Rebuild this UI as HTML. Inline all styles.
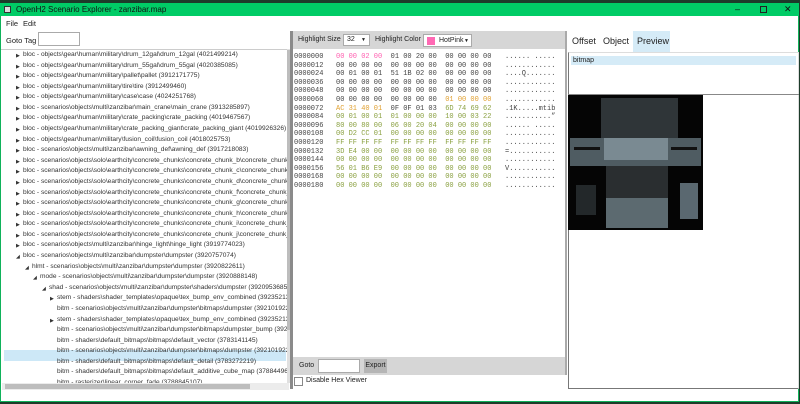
<!DOCTYPE html>
<html><head><meta charset="utf-8"><style>
*{margin:0;padding:0;box-sizing:border-box}
body{width:800px;height:404px;overflow:hidden;background:#1d3b2a;font-family:"Liberation Sans",sans-serif;font-size:7.5px;color:#222;position:relative}
.abs{position:absolute}
#win{left:0;top:3px;width:799px;height:399px;background:#fff;border:1px solid #0fb25a}
#title{left:0;top:3px;width:799px;height:13px;background:#00cc66;font-size:8px;line-height:13px;color:#111}
.row{position:absolute;white-space:nowrap;height:10.6px;line-height:10.6px;font-size:6.6px;color:#333}
.ar{position:absolute;font-size:5px;color:#333}
.hex{position:absolute;white-space:pre;font-family:"Liberation Mono",monospace;font-size:7px;line-height:8.6px;color:#444}
.p{color:#ff5fb0}.o{color:#e0a030}.g{color:#8aa040}
</style></head><body>
<div id="win" class="abs"></div>
<div id="title" class="abs"><span class="abs" style="left:4px;top:3px;width:7px;height:7px;border:1px solid #333;background:#ddd"></span><span class="abs" style="left:16px;top:0">OpenH2 Scenario Explorer - zanzibar.map</span>
<span class="abs" style="left:735px;top:0;font-size:9px">–</span>
<span class="abs" style="left:760px;top:3px;width:7px;height:7px;border:1px solid #222"></span>
<span class="abs" style="left:784px;top:0;font-size:9px">✕</span></div>
<div class="abs" style="left:6px;top:19px;font-size:7.5px">File</div>
<div class="abs" style="left:23px;top:19px;font-size:7.5px">Edit</div>
<div class="abs" style="left:6px;top:36px;font-size:7.5px">Goto Tag</div>
<div class="abs" style="left:38px;top:32px;width:42px;height:14px;border:1px solid #aaa"></div>
<div class="abs" style="left:1px;top:49px;width:289px;height:340px;overflow:hidden;border-top:1px solid #ccc">
<div class="abs" style="left:3px;top:300px;width:282px;height:10.6px;background:#cde8f7"></div>
</div>
<div id="tree"></div>
<div class="abs" style="left:287px;top:49px;width:4px;height:334px;background:#e0e0e0"></div>
<div class="abs" style="left:287px;top:50px;width:4px;height:280px;background:#bdbdbd"></div>
<div class="abs" style="left:2px;top:383px;width:287px;height:7px;background:#ececec"></div>
<div class="abs" style="left:5px;top:384px;width:245px;height:5px;background:#bdbdbd"></div>
<div class="abs" style="left:290px;top:31px;width:3px;height:358px;background:#8a8a8a"></div>
<div class="abs" style="left:293px;top:31px;width:272px;height:18px;background:#d6d6d6"></div>
<div class="abs" style="left:298px;top:36px;font-size:7px">Highlight Size</div>
<div class="abs" style="left:343px;top:34px;width:27px;height:12px;background:#fff;border:1px solid #aaa;font-size:7px;padding:1px 3px">32 <span style="position:absolute;right:3px;font-size:5px;top:2px">▼</span></div>
<div class="abs" style="left:375px;top:36px;font-size:7px">Highlight Color</div>
<div class="abs" style="left:423px;top:34px;width:49px;height:13px;background:#fff;border:1px solid #aaa;font-size:7px"><span class="abs" style="left:3px;top:2px;width:8px;height:8px;background:#ff69b4"></span><span class="abs" style="left:15px;top:2px">HotPink</span><span class="abs" style="left:40px;top:3px;font-size:5px">▼</span></div>
<div class="hex" style="left:294px;top:53px">0000000
0000012
0000024
0000036
0000048
0000060
0000072
0000084
0000096
0000108
0000120
0000132
0000144
0000156
0000168
0000180</div>
<div class="hex" style="left:336px;top:53px"><span class="p">00 00 02 00</span>  01 00 20 00  00 00 00 00
00 00 00 00  00 00 00 00  00 00 00 00
00 01 00 01  51 1B 02 00  00 00 00 00
00 00 00 00  00 00 00 00  00 00 00 00
00 00 00 00  00 00 00 00  00 00 00 00
00 00 00 00  00 00 00 00  <span class="o">01 00 00 00</span>
<span class="o">AC 31 40 01</span>  0F 0F 01 03  <span class="g">6D 74 69 62</span>
<span class="g">00 01 00 01  01 00 00 00  10 00 03 22
80 00 80 00  06 00 20 04  00 00 00 00
00 D2 CC 01  00 00 00 00  00 00 00 00
FF FF FF FF  FF FF FF FF  FF FF FF FF
3D E4 00 00  00 00 00 00  00 00 00 00
00 00 00 00  00 00 00 00  00 00 00 00
56 01 B6 E9  00 00 00 00  00 00 00 00
00 00 00 00  00 00 00 00  00 00 00 00
00 00 00 00  00 00 00 00  00 00 00 00</span></div>
<div class="hex" style="left:505px;top:53px">...... .....
............
....Q.......
............
............
............
.1K.....mtib
...........”
...... .....
............
............
=...........
............
V...........
............
............</div>
<div class="abs" style="left:293px;top:357px;width:272px;height:18px;background:#d6d6d6"></div>
<div class="abs" style="left:299px;top:362px;font-size:7px">Goto</div>
<div class="abs" style="left:318px;top:359px;width:42px;height:14px;background:#fff;border:1px solid #aaa"></div>
<div class="abs" style="left:364px;top:359px;width:23px;height:14px;background:#b5b5b5;font-size:7px;line-height:14px;text-align:center">Export</div>
<div class="abs" style="left:294px;top:377px;width:9px;height:9px;border:1px solid #888;background:#fff"></div>
<div class="abs" style="left:306px;top:377px;font-size:7px">Disable Hex Viewer</div>
<div class="abs" style="left:565px;top:31px;width:2px;height:344px;background:#aaa"></div>
<div class="abs" style="left:568px;top:52px;width:231px;height:337px;border:1px solid #777;border-top:1px solid #ddd;border-right:1px solid #ddd"></div>
<div class="abs" style="left:633px;top:31px;width:37px;height:21px;background:#d5ebf7"></div>
<div class="abs" style="left:572px;top:36px;font-size:9px">Offset</div>
<div class="abs" style="left:603px;top:36px;font-size:9px">Object</div>
<div class="abs" style="left:637px;top:36px;font-size:9px">Preview</div>
<div class="abs" style="left:571px;top:56px;width:225px;height:9px;background:#d5ebf7;font-size:7px;line-height:9px;padding-left:2px">bitmap</div>
<div class="abs" style="left:568px;top:94px;width:231px;height:1px;background:#888"></div>
<div class="abs" style="left:568px;top:95px;width:135px;height:135px;background:#050505">
<div class="abs" style="left:33px;top:3px;width:77px;height:41px;background:#2f3538"></div>
<div class="abs" style="left:2px;top:43px;width:131px;height:28px;background:#4f5c62"></div>
<div class="abs" style="left:36px;top:43px;width:64px;height:22px;background:#7a8a92"></div>
<div class="abs" style="left:6px;top:52px;width:26px;height:3px;background:#111"></div>
<div class="abs" style="left:103px;top:52px;width:26px;height:3px;background:#111"></div>
<div class="abs" style="left:38px;top:71px;width:62px;height:32px;background:#2a2e30"></div>
<div class="abs" style="left:38px;top:103px;width:62px;height:30px;background:#5c6a70"></div>
<div class="abs" style="left:8px;top:90px;width:20px;height:30px;background:#23282a"></div>
<div class="abs" style="left:112px;top:88px;width:18px;height:36px;background:#5a6870"></div>
</div>
<script>
const rows=[
[0,1,"bloc - objects\\gear\\human\\military\\drum_12gal\\drum_12gal (4021499214)"],
[0,1,"bloc - objects\\gear\\human\\military\\drum_55gal\\drum_55gal (4020385085)"],
[0,1,"bloc - objects\\gear\\human\\military\\pallet\\pallet (3912171775)"],
[0,1,"bloc - objects\\gear\\human\\military\\tire\\tire (3912499460)"],
[0,1,"bloc - objects\\gear\\human\\military\\case\\case (4024251768)"],
[0,1,"bloc - scenarios\\objects\\multi\\zanzibar\\main_crane\\main_crane (3913285897)"],
[0,1,"bloc - objects\\gear\\human\\military\\crate_packing\\crate_packing (4019467567)"],
[0,1,"bloc - objects\\gear\\human\\military\\crate_packing_giant\\crate_packing_giant (4019926326)"],
[0,1,"bloc - objects\\gear\\human\\military\\fusion_coil\\fusion_coil (4018025753)"],
[0,1,"bloc - scenarios\\objects\\multi\\zanzibar\\awning_def\\awning_def (3917218083)"],
[0,1,"bloc - scenarios\\objects\\solo\\earthcity\\concrete_chunks\\concrete_chunk_b\\concrete_chunk_b (3"],
[0,1,"bloc - scenarios\\objects\\solo\\earthcity\\concrete_chunks\\concrete_chunk_c\\concrete_chunk_c (3"],
[0,1,"bloc - scenarios\\objects\\solo\\earthcity\\concrete_chunks\\concrete_chunk_d\\concrete_chunk_d (3"],
[0,1,"bloc - scenarios\\objects\\solo\\earthcity\\concrete_chunks\\concrete_chunk_f\\concrete_chunk_f (3"],
[0,1,"bloc - scenarios\\objects\\solo\\earthcity\\concrete_chunks\\concrete_chunk_g\\concrete_chunk_g (3"],
[0,1,"bloc - scenarios\\objects\\solo\\earthcity\\concrete_chunks\\concrete_chunk_h\\concrete_chunk_h (3"],
[0,1,"bloc - scenarios\\objects\\solo\\earthcity\\concrete_chunks\\concrete_chunk_i\\concrete_chunk_i (3"],
[0,1,"bloc - scenarios\\objects\\solo\\earthcity\\concrete_chunks\\concrete_chunk_j\\concrete_chunk_j (3"],
[0,1,"bloc - scenarios\\objects\\multi\\zanzibar\\hinge_light\\hinge_light (3919774023)"],
[0,2,"bloc - scenarios\\objects\\multi\\zanzibar\\dumpster\\dumpster (3920757074)"],
[1,2,"hlmt - scenarios\\objects\\multi\\zanzibar\\dumpster\\dumpster (3920822611)"],
[2,2,"mode - scenarios\\objects\\multi\\zanzibar\\dumpster\\dumpster (3920888148)"],
[3,2,"shad - scenarios\\objects\\multi\\zanzibar\\dumpster\\shaders\\dumpster (3920953685)"],
[4,1,"stem - shaders\\shader_templates\\opaque\\tex_bump_env_combined (3923521399)"],
[4,0,"bitm - scenarios\\objects\\multi\\zanzibar\\dumpster\\bitmaps\\dumpster (3921019222)"],
[4,1,"stem - shaders\\shader_templates\\opaque\\tex_bump_env_combined (3923521399)"],
[4,0,"bitm - scenarios\\objects\\multi\\zanzibar\\dumpster\\bitmaps\\dumpster_bump (3921084759)"],
[4,0,"bitm - shaders\\default_bitmaps\\bitmaps\\default_vector (3783141145)"],
[4,0,"bitm - scenarios\\objects\\multi\\zanzibar\\dumpster\\bitmaps\\dumpster (3921019222)"],
[4,0,"bitm - shaders\\default_bitmaps\\bitmaps\\default_detail (3783272219)"],
[4,0,"bitm - shaders\\default_bitmaps\\bitmaps\\default_additive_cube_map (3788449642)"],
[4,0,"bitm - rasterizer\\linear_corner_fade (3788845107)"]];
const tx=[22,31,39,48,56];
let h='<div class="abs" style="left:1px;top:49px;width:286px;height:334px;overflow:hidden">';
rows.forEach((r,i)=>{const y=i*10.58+1;
if(r[1]) h+=`<span class="ar" style="left:${tx[r[0]]-7}px;top:${y+3}px">${r[1]==1?'▶':'◢'}</span>`;
h+=`<div class="row" style="left:${tx[r[0]]}px;top:${y}px">${r[2]}</div>`;});
h+='</div>';document.getElementById('tree').outerHTML=h;
</script>
</body></html>
